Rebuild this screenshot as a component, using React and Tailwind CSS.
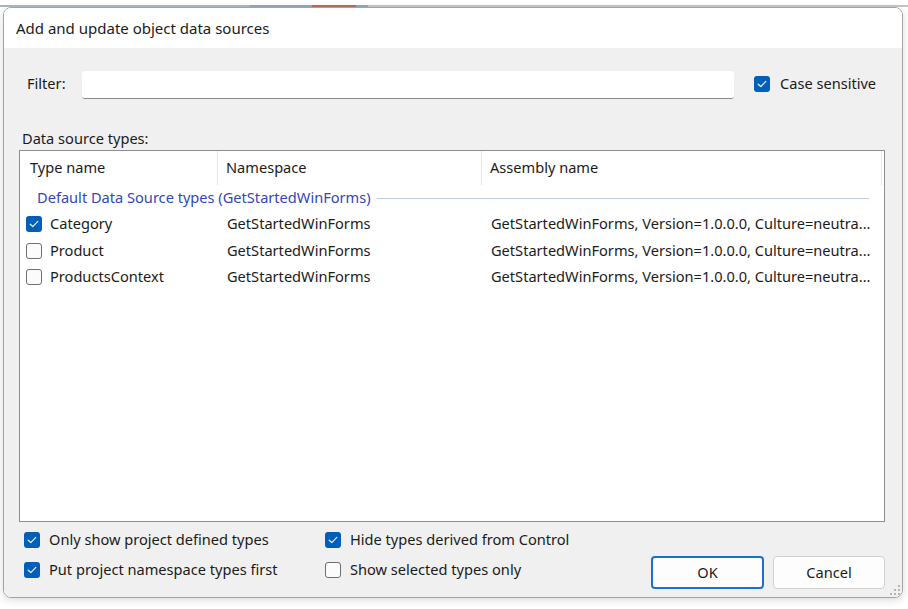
import React from "react";

const font = { fontFamily: '"Noto Sans", "Open Sans", sans-serif' };

const Check = ({ checked }) =>
  checked ? (
    <span className="flex h-[16px] w-[16px] shrink-0 items-center justify-center rounded-[3px] bg-[#005fb8]">
      <svg width="10" height="8" viewBox="0 0 10 8" fill="none">
        <path d="M1.2 4.2 L3.8 6.6 L8.8 1.4" stroke="#dfe9f5" strokeWidth="1.3" strokeLinecap="round" strokeLinejoin="round" />
      </svg>
    </span>
  ) : (
    <span className="h-[16px] w-[16px] shrink-0 rounded-[3px] border border-[#6f6f6f] bg-[#fbfbfb]" />
  );

const rows = [
  { name: "Category", checked: true },
  { name: "Product", checked: false },
  { name: "ProductsContext", checked: false },
];

const options = [
  [
    { label: "Only show project defined types", checked: true },
    { label: "Put project namespace types first", checked: true },
  ],
  [
    { label: "Hide types derived from Control", checked: true },
    { label: "Show selected types only", checked: false },
  ],
];

export default function App() {
  return (
    <div className="h-[609px] w-[908px] overflow-hidden bg-white text-[14.6px] text-[#1b1b1b]" style={font}>
      {/* window behind the dialog */}
      <div className="flex h-[7px] items-end">
        <div className="h-[2px] w-[250px] bg-[#a9b3bf]" />
        <div className="h-[2px] w-[62px] bg-[#8fa2b6]" />
        <div className="h-[2px] w-[44px] bg-[#b86a58]" />
        <div className="h-[2px] w-[12px] bg-[#8fa2b6]" />
        <div className="h-[2px] flex-1 bg-[#c2c2c2]" />
      </div>

      <div className="ml-[3px] flex h-[591px] w-[900px] flex-col overflow-hidden rounded-lg border border-[#a3a3a3] shadow-[0_2px_8px_rgba(0,0,0,0.15)]">
        <div className="flex h-[40px] shrink-0 items-center bg-white pl-[12px] text-[15px]">
          Add and update object data sources
        </div>

        <div className="relative flex flex-1 flex-col bg-[#f0f0f0] pl-[15px] pr-[17px] pt-[23px]">
          <div className="flex h-[28px] items-center">
            <span className="-mt-[2px] ml-[8px] w-[55px]">Filter:</span>
            <div className="h-[28px] w-[652px] rounded-[3px] border-b border-[#8a8a8a] bg-white" />
            <span className="-mt-[2px] ml-[20px]">
              <Check checked />
            </span>
            <span className="-mt-[3px] ml-[10px]">Case sensitive</span>
          </div>

          <div className="ml-[3px] mt-[29px] h-[20px] leading-[20px]">Data source types:</div>

          <div className="mt-[2px] flex h-[372px] flex-col border border-[#8e8e8e] bg-white pr-[2px]">
            <div className="flex h-[34px] shrink-0 items-center">
              <div className="flex h-full w-[198px] items-center border-r border-[#e5e5e5] pl-[10px]">Type name</div>
              <div className="flex h-full w-[264px] items-center border-r border-[#e5e5e5] pl-[8px]">Namespace</div>
              <div className="flex h-full flex-1 items-center border-r border-[#e5e5e5] pl-[8px]">Assembly name</div>
            </div>

            <div className="flex h-[26px] shrink-0 items-center pl-[17px] pr-[13px]">
              <span className="text-[#3346bd]">Default Data Source types (GetStartedWinForms)</span>
              <div className="ml-[6px] h-px flex-1 bg-[#c3cbe6]" />
            </div>

            {rows.map((row) => (
              <div key={row.name} className="flex h-[26.5px] shrink-0 items-center">
                <div className="flex w-[198px] items-center gap-[8px] pl-[6px]">
                  <Check checked={row.checked} />
                  <span>{row.name}</span>
                </div>
                <div className="w-[264px] pl-[9px]">GetStartedWinForms</div>
                <div className="whitespace-nowrap pl-[9px]">
                  GetStartedWinForms, Version=1.0.0.0, Culture=neutra...
                </div>
              </div>
            ))}
          </div>

          <div className="flex flex-1 items-start">
            <div className="mt-[10px] flex">
              {options.map((col, i) => (
                <div key={i} className={`flex flex-col gap-[14px] ${i === 0 ? "ml-[5px] w-[301px]" : ""}`}>
                  {col.map((opt) => (
                    <div key={opt.label} className="flex h-[16px] items-center gap-[9px]">
                      <Check checked={opt.checked} />
                      <span>{opt.label}</span>
                    </div>
                  ))}
                </div>
              ))}
            </div>

            <div className="ml-auto mt-[34px] flex gap-[9px]">
              <button className="h-[33px] w-[113px] rounded-[4px] border-2 border-[#1a72c8] bg-[#fdfdfd] text-[14.6px] text-[#1b1b1b]">
                OK
              </button>
              <button className="h-[33px] w-[112px] rounded-[4px] border border-[#d0d0d0] bg-[#fdfdfd] text-[14.6px] text-[#1b1b1b]">
                Cancel
              </button>
            </div>
          </div>

          {/* resize grip */}
          <svg className="absolute bottom-[1px] right-[1px]" width="12" height="12" viewBox="0 0 12 12">
            {[
              [10, 2], [10, 6], [10, 10], [6, 6], [6, 10], [2, 10],
            ].map(([x, y]) => (
              <rect key={`${x}-${y}`} x={x - 1} y={y - 1} width="2" height="2" fill="#b5b5b5" />
            ))}
          </svg>
        </div>
      </div>
    </div>
  );
}
